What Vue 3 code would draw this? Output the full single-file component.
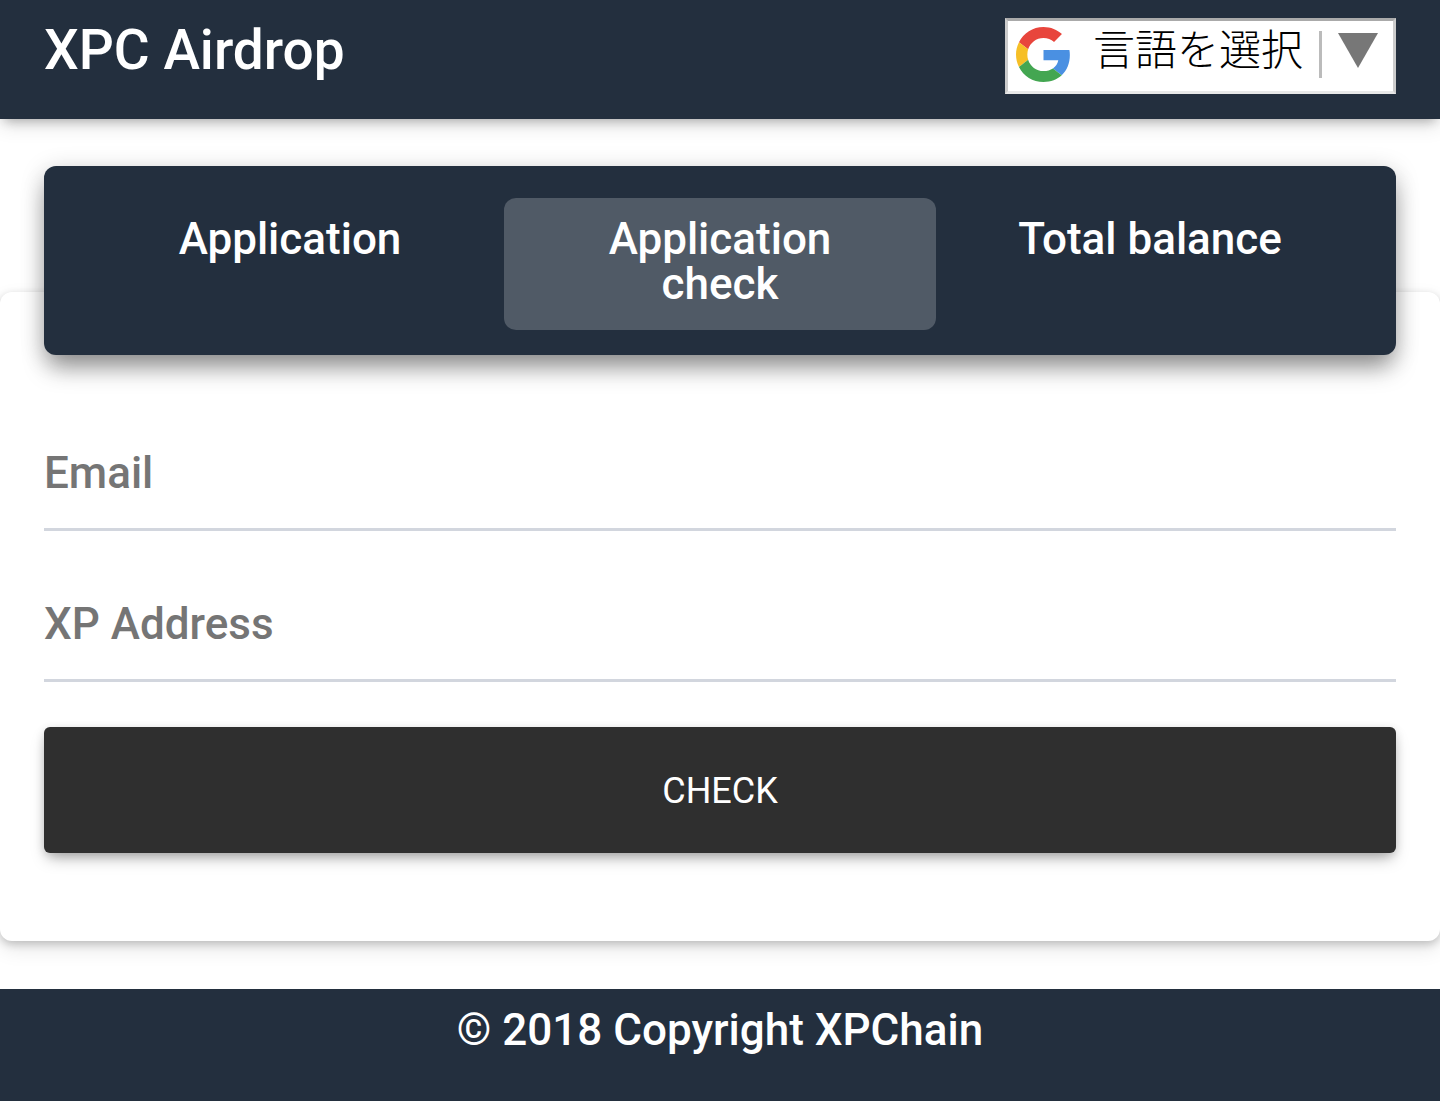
<template>
  <div class="page">
    <header class="top-bar">
      <h1 class="brand">XPC Airdrop</h1>
      <div class="translate">
        <svg class="g-logo" viewBox="0 0 48 48" width="55" height="55">
          <path fill="#e8453c" d="M24 9.500c3.500 0 6.700 1.200 9.200 3.600l6.900-6.900C35.900 2.400 30.500 0 24 0 14.600 0 6.500 5.400 2.600 13.200l8 6.200C12.400 13.700 17.700 9.500 24 9.500z" />
          <path fill="#4a90e2" d="M47 24.500c0-1.600-.1-3.100-.4-4.500H24v9h12.900c-.6 3-2.200 5.500-4.700 7.200l7.700 6C44.400 38 47 31.800 47 24.500z" />
          <path fill="#f6bf26" d="M10.600 28.600c-.5-1.400-.7-3-.7-4.600s.3-3.200.7-4.600l-8-6.200C.9 16.500 0 20.100 0 24s.9 7.500 2.600 10.800l8-6.200z" />
          <path fill="#43a651" d="M24 48c6.500 0 11.900-2.100 15.900-5.800l-7.700-6c-2.200 1.400-4.900 2.300-8.200 2.300-6.300 0-11.600-4.200-13.400-10L2.600 34.800C6.500 42.600 14.600 48 24 48z" />
        </svg>
        <span class="translate-label">言語を選択</span>
        <span class="translate-sep"></span>
        <span class="translate-arrow"></span>
      </div>
    </header>

    <main class="content">
      <section class="card">
        <nav class="tabs">
          <a
            v-for="tab in tabs"
            :key="tab"
            class="tab"
            :class="{ active: tab === current }"
            @click="current = tab"
          >{{ tab }}</a>
        </nav>
        <form class="form" @submit.prevent>
          <input class="field" type="text" placeholder="Email" />
          <input class="field" type="text" placeholder="XP Address" />
          <button class="check-btn" type="submit">CHECK</button>
        </form>
      </section>
    </main>

    <footer class="site-footer">© 2018 Copyright XPChain</footer>
  </div>
</template>

<script setup>
import { ref } from "vue";

const tabs = ["Application", "Application check", "Total balance"];
const current = ref("Application check");
</script>

<style scoped>
.page {
  font-family: Roboto, "Liberation Sans", sans-serif;
  height: 1101px;
  overflow: hidden;
  background: #fff;
}
.top-bar {
  height: 119px;
  box-sizing: border-box;
  padding: 0 44px;
  display: flex;
  justify-content: space-between;
  background: #232f3e;
  box-shadow: 0 4px 20px rgba(0, 0, 0, 0.16), 0 7px 10px -5px rgba(0, 0, 0, 0.24);
  position: relative;
}
.brand {
  margin: 17px 0 0;
  font-size: 55px;
  line-height: 66px;
  font-weight: 500;
  color: #fff;
}
.translate {
  margin-top: 18px;
  width: 391px;
  height: 76px;
  box-sizing: border-box;
  display: flex;
  align-items: center;
  background: #fff;
  border: 3px solid;
  border-color: #aaa #ccc #e8e8e8 #ccc;
  padding: 0 0 0 8px;
}
.g-logo {
  flex: none;
  margin-top: -3px;
  filter: blur(0.5px);
}
.translate-label {
  margin-left: 22px;
  font-family: "Noto Sans CJK JP", sans-serif;
  font-size: 42px;
  font-weight: 300;
  line-height: 50px;
  color: #000;
  margin-top: -19px;
}
.translate-sep {
  margin-left: 16px;
  width: 3px;
  height: 47px;
  background: #bbb;
  margin-top: -3px;
}
.translate-arrow {
  margin-left: 16px;
  margin-top: -12px;
  width: 0;
  height: 0;
  border-left: 20px solid transparent;
  border-right: 20px solid transparent;
  border-top: 35px solid #777;
}
.content {
  padding: 173px 0 48px;
}
.card {
  height: 649px;
  box-sizing: border-box;
  background: #fff;
  border-radius: 12px;
  box-shadow: 0 3px 8px rgba(0, 0, 0, 0.2), 0 8px 20px rgba(0, 0, 0, 0.1);
  padding: 0 44px;
}
.tabs {
  position: relative;
  top: -126px;
  height: 189px;
  box-sizing: border-box;
  padding: 32px 31px 25px;
  display: grid;
  grid-template-columns: repeat(3, 1fr);
  align-items: start;
  background: #232f3e;
  border-radius: 12px;
  box-shadow: 0 16px 24px -4px rgba(0, 0, 0, 0.38), 0 4px 24px rgba(0, 0, 0, 0.18);
}
.tab {
  height: 132px;
  box-sizing: border-box;
  padding: 19px 48px 0;
  border-radius: 12px;
  color: #fff;
  font-size: 44px;
  font-weight: 500;
  line-height: 45px;
  text-align: center;
  cursor: pointer;
}
.tab.active {
  margin: 0 -1px;
  background: #505a66;
}
.form {
  margin-top: -126px;
  display: flex;
  flex-direction: column;
}
.field {
  display: block;
  width: 100%;
  box-sizing: border-box;
  height: 87px;
  margin-top: 64px;
  padding: 0 0 26px 0;
  border: 0;
  border-bottom: 3px solid #d2d6de;
  outline: none;
  background: none;
  font-family: inherit;
  font-size: 44px;
  font-weight: 500;
  color: #757575;
}
.field:first-child {
  margin-top: 89px;
}
.field::placeholder {
  color: #757575;
  opacity: 1;
}
.check-btn {
  margin-top: 45px;
  height: 126px;
  padding: 2px 0 0;
  border: 0;
  border-radius: 6px;
  background: #2f2f2f;
  color: #fff;
  font-family: inherit;
  font-size: 36px;
  cursor: pointer;
  box-shadow: 0 8px 16px -4px rgba(0, 0, 0, 0.34), 0 2px 10px rgba(0, 0, 0, 0.12);
}
.site-footer {
  height: 112px;
  box-sizing: border-box;
  padding-top: 15px;
  background: #232f3e;
  color: #fff;
  font-size: 44px;
  font-weight: 500;
  line-height: 53px;
  text-align: center;
}
</style>
